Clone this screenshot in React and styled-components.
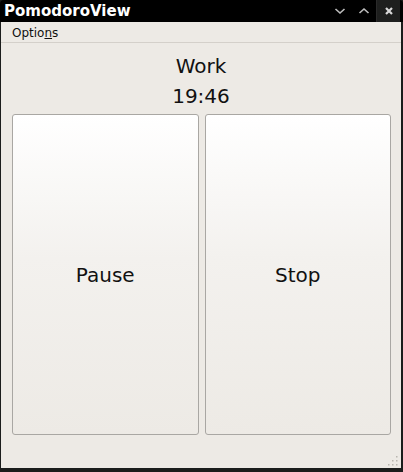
import styled, { createGlobalStyle } from 'styled-components';

const Global = createGlobalStyle`
  html, body { margin: 0; padding: 0; background: #1b1d1c; }
  * { box-sizing: border-box; }
`;

const Frame = styled.div`
  width: 403px;
  height: 472px;
  display: flex;
  flex-direction: column;
  background: #1b1d1c;
  font-family: "DejaVu Sans", sans-serif;
  padding: 0 2px 4px 1px;
`;

const TitleBar = styled.div`
  height: 22px;
  display: flex;
  align-items: center;
  background: #000;
  margin: 0 -2px 0 -1px;
  border-radius: 4px 4px 0 0;
`;

const Title = styled.div`
  flex: 1;
  color: #fff;
  font-weight: bold;
  font-size: 15px;
  padding-left: 4px;
`;

const TitleButton = styled.div`
  width: 24px;
  height: 22px;
  display: flex;
  align-items: center;
  justify-content: center;
  background: ${(p) => (p.close ? '#1e1f1e' : 'transparent')};
  border-left: ${(p) => (p.close ? '1px solid #2a2a2a' : 'none')};
  margin-right: ${(p) => (p.close ? '3px' : '0')};
`;

const Body = styled.div`
  flex: 1;
  display: flex;
  flex-direction: column;
  background: #edeae5;
`;

const MenuBar = styled.div`
  height: 21px;
  display: flex;
  align-items: center;
  padding-left: 11px;
  padding-top: 2px;
  font-size: 12px;
  color: #101010;
  border-bottom: 1px solid #d4d0ca;
`;

const Underline = styled.span`
  text-decoration: underline;
`;

const Label = styled.div`
  text-align: center;
  font-size: 20px;
  color: #111;
  line-height: 30px;
`;

const Header = styled.div`
  display: flex;
  flex-direction: column;
  padding-top: 8px;
  margin-bottom: 3px;
`;

const Buttons = styled.div`
  display: flex;
  gap: 6px;
  padding: 0 10px 0 11px;
  height: 321px;
`;

const Button = styled.button`
  flex: 1;
  border: 1px solid #a9a7a3;
  border-radius: 3px;
  background: linear-gradient(to bottom, #ffffff 0%, #f3f1ee 45%, #edeae5 100%);
  font-family: "DejaVu Sans", sans-serif;
  font-size: 20px;
  color: #111;
  padding: 0;
`;

const Grip = styled.svg`
  align-self: flex-end;
  margin-top: auto;
  margin-right: 2px;
  margin-bottom: 1px;
`;

const chev = (d) => (
  <svg width="12" height="8" viewBox="0 0 12 8">
    <path d={d} stroke="#bdbdbd" strokeWidth="1.6" fill="none" />
  </svg>
);

export default function App() {
  return (
    <>
      <Global />
      <Frame>
        <TitleBar>
          <Title>PomodoroView</Title>
          <TitleButton>{chev('M1.5 2 L6 6 L10.5 2')}</TitleButton>
          <TitleButton>{chev('M1.5 6 L6 2 L10.5 6')}</TitleButton>
          <TitleButton close>
            <svg width="10" height="10" viewBox="0 0 10 10">
              <path d="M2 2 L8 8 M8 2 L2 8" stroke="#d8d8d8" strokeWidth="2.2" />
            </svg>
          </TitleButton>
        </TitleBar>
        <Body>
          <MenuBar>
            <span>Optio<Underline>n</Underline>s</span>
          </MenuBar>
          <Header>
            <Label>Work</Label>
            <Label>19:46</Label>
          </Header>
          <Buttons>
            <Button>Pause</Button>
            <Button>Stop</Button>
          </Buttons>
          <Grip width="12" height="12" viewBox="0 0 12 12">
            {[[10, 2], [10, 6], [6, 6], [10, 10], [6, 10], [2, 10]].map(([x, y]) => (
              <rect key={x + '-' + y} x={x - 1} y={y - 1} width="1.5" height="1.5" fill="#b9b6b0" />
            ))}
          </Grip>
        </Body>
      </Frame>
    </>
  );
}
